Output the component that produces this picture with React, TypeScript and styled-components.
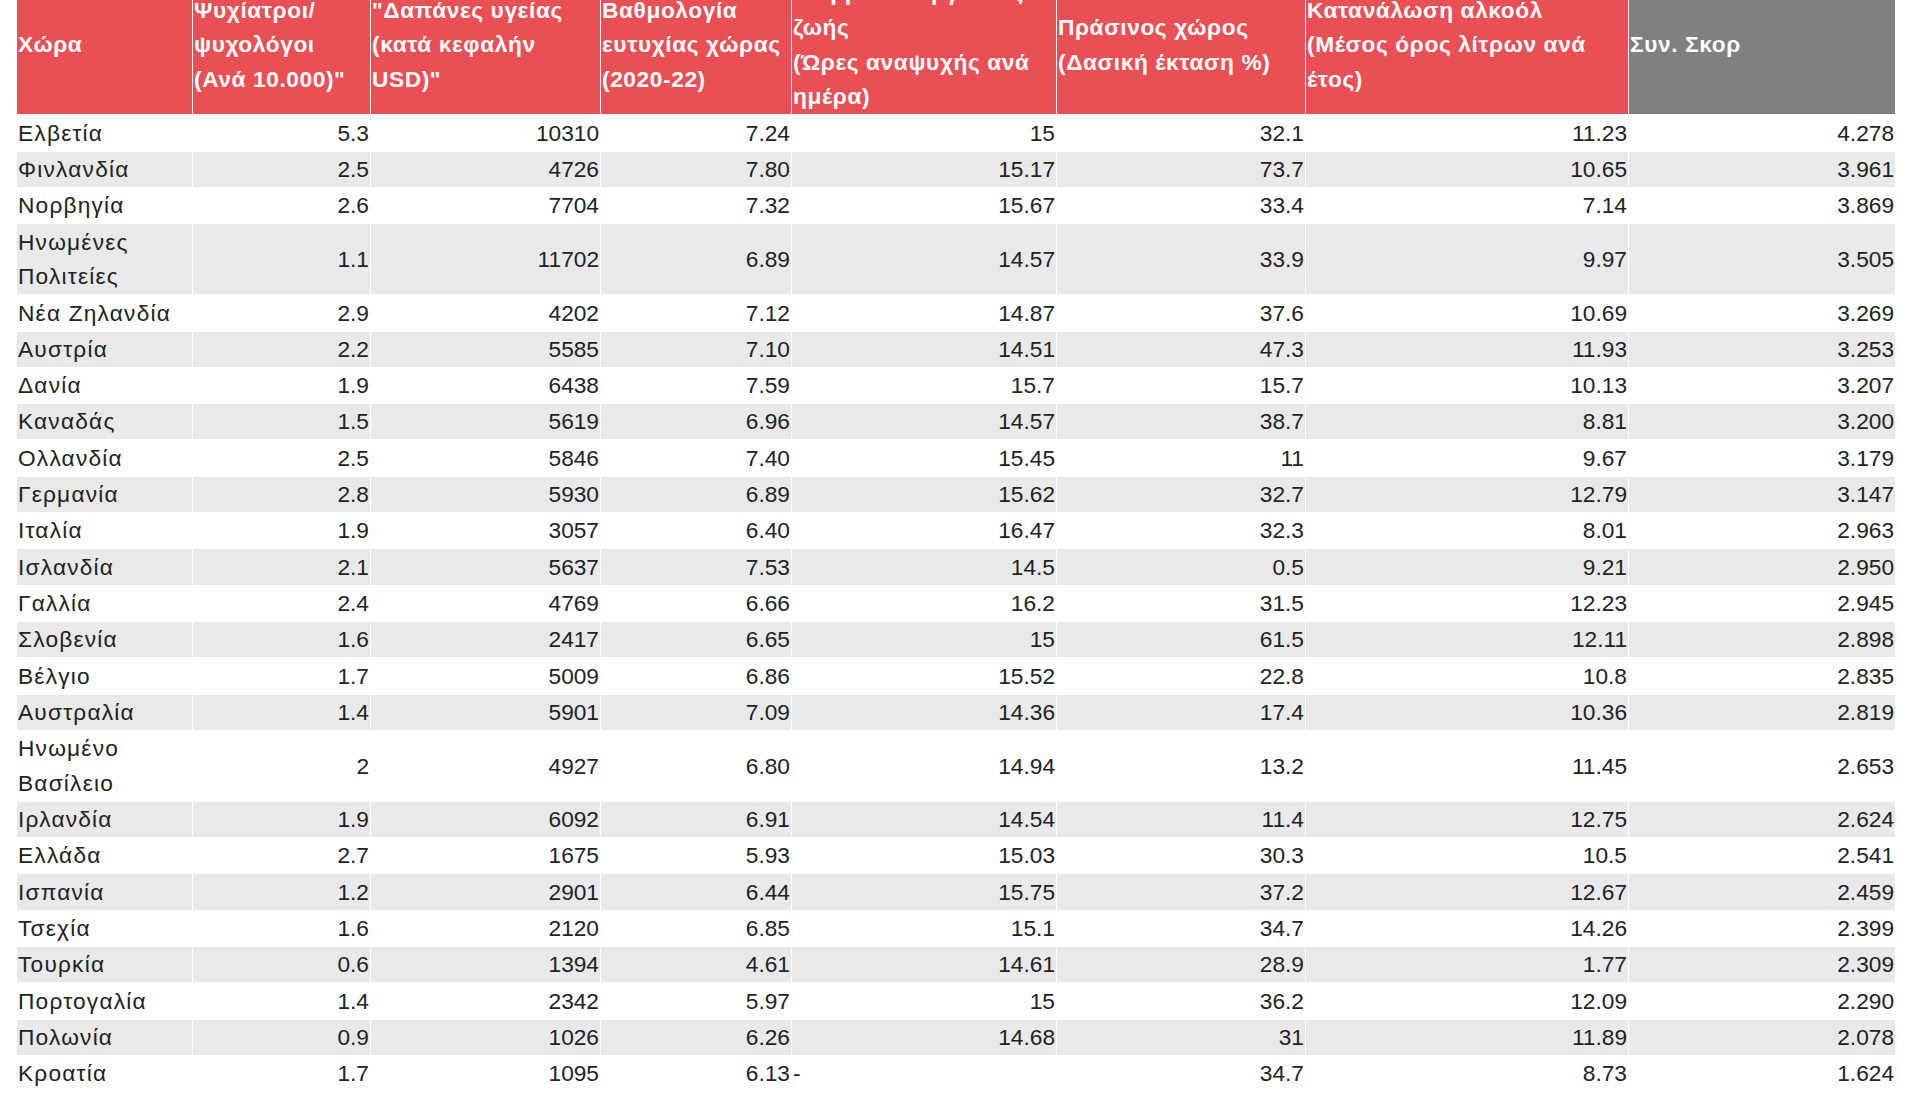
import styled, { createGlobalStyle } from "styled-components"

const GlobalStyle = createGlobalStyle`
  html, body {
    margin: 0;
    padding: 0;
    background: #ffffff;
  }
  body {
    font-family: "Liberation Sans", Arial, "Noto Sans", sans-serif;
    overflow: hidden;
  }
`

const Page = styled.div`
  padding: 0 13px 0 16px;
`

const Table = styled.table`
  border-collapse: collapse;
  table-layout: fixed;
  width: 1879px;
  margin-top: -26px;
  font-size: 22.7px;
  line-height: 34.7px;
`

const HeadCell = styled.th<{ $tone?: "red" | "gray" }>`
  background: ${(p) => (p.$tone === "gray" ? "#808080" : "#E94F54")};
  color: #ffffff;
  font-weight: 700;
  letter-spacing: 0.6px;
  text-align: left;
  vertical-align: middle;
  padding: 0.3px 1px;
  border: 1px solid #ffffff;
  white-space: nowrap;
`

const Row = styled.tr`
  &:nth-child(even) {
    background: #E9E9E9;
  }
`

const Cell = styled.td<{ $num?: boolean }>`
  color: #222222;
  text-align: ${(p) => (p.$num ? "right" : "left")};
  letter-spacing: ${(p) => (p.$num ? "0" : "1.2px")};
  vertical-align: middle;
  padding: 0.3px 1px;
  border: 1px solid #ffffff;
  white-space: ${(p) => (p.$num ? "nowrap" : "normal")};
`

const widths = [176, 178, 230, 191, 265, 249, 323, 267]

const headers: { lines: string[]; tone?: "red" | "gray" }[] = [
  { lines: ["Χώρα"] },
  { lines: ["Ψυχίατροι/", "ψυχολόγοι", "(Ανά 10.000)\""] },
  { lines: ["\"Δαπάνες υγείας", "(κατά κεφαλήν", "USD)\""] },
  { lines: ["Βαθμολογία", "ευτυχίας χώρας", "(2020-22)"] },
  { lines: ["Ισορροπία εργασίας/", "ζωής", "(Ώρες αναψυχής ανά", "ημέρα)"] },
  { lines: ["Πράσινος χώρος", "(Δασική έκταση %)"] },
  { lines: ["Κατανάλωση αλκοόλ", "(Μέσος όρος λίτρων ανά", "έτος)"] },
  { lines: ["Συν. Σκορ"], tone: "gray" },
]

// χώρα, ψυχίατροι, δαπάνες, ευτυχία, ισορροπία, πράσινο, αλκοόλ, σκορ
const rows: string[][] = [
  ["Ελβετία", "5.3", "10310", "7.24", "15", "32.1", "11.23", "4.278"],
  ["Φινλανδία", "2.5", "4726", "7.80", "15.17", "73.7", "10.65", "3.961"],
  ["Νορβηγία", "2.6", "7704", "7.32", "15.67", "33.4", "7.14", "3.869"],
  ["Ηνωμένες Πολιτείες", "1.1", "11702", "6.89", "14.57", "33.9", "9.97", "3.505"],
  ["Νέα Ζηλανδία", "2.9", "4202", "7.12", "14.87", "37.6", "10.69", "3.269"],
  ["Αυστρία", "2.2", "5585", "7.10", "14.51", "47.3", "11.93", "3.253"],
  ["Δανία", "1.9", "6438", "7.59", "15.7", "15.7", "10.13", "3.207"],
  ["Καναδάς", "1.5", "5619", "6.96", "14.57", "38.7", "8.81", "3.200"],
  ["Ολλανδία", "2.5", "5846", "7.40", "15.45", "11", "9.67", "3.179"],
  ["Γερμανία", "2.8", "5930", "6.89", "15.62", "32.7", "12.79", "3.147"],
  ["Ιταλία", "1.9", "3057", "6.40", "16.47", "32.3", "8.01", "2.963"],
  ["Ισλανδία", "2.1", "5637", "7.53", "14.5", "0.5", "9.21", "2.950"],
  ["Γαλλία", "2.4", "4769", "6.66", "16.2", "31.5", "12.23", "2.945"],
  ["Σλοβενία", "1.6", "2417", "6.65", "15", "61.5", "12.11", "2.898"],
  ["Βέλγιο", "1.7", "5009", "6.86", "15.52", "22.8", "10.8", "2.835"],
  ["Αυστραλία", "1.4", "5901", "7.09", "14.36", "17.4", "10.36", "2.819"],
  ["Ηνωμένο Βασίλειο", "2", "4927", "6.80", "14.94", "13.2", "11.45", "2.653"],
  ["Ιρλανδία", "1.9", "6092", "6.91", "14.54", "11.4", "12.75", "2.624"],
  ["Ελλάδα", "2.7", "1675", "5.93", "15.03", "30.3", "10.5", "2.541"],
  ["Ισπανία", "1.2", "2901", "6.44", "15.75", "37.2", "12.67", "2.459"],
  ["Τσεχία", "1.6", "2120", "6.85", "15.1", "34.7", "14.26", "2.399"],
  ["Τουρκία", "0.6", "1394", "4.61", "14.61", "28.9", "1.77", "2.309"],
  ["Πορτογαλία", "1.4", "2342", "5.97", "15", "36.2", "12.09", "2.290"],
  ["Πολωνία", "0.9", "1026", "6.26", "14.68", "31", "11.89", "2.078"],
  ["Κροατία", "1.7", "1095", "6.13", "-", "34.7", "8.73", "1.624"],
]

// αριθμοί δεξιά, κείμενο αριστερά (όπως σε λογιστικό φύλλο)
const isNumber = (v: string) => /^[0-9.]+$/.test(v)

export default function App() {
  return (
    <Page>
      <GlobalStyle />
      <Table>
        <colgroup>
          {widths.map((w, i) => (
            <col key={i} style={{ width: w }} />
          ))}
        </colgroup>
        <thead>
          <tr>
            {headers.map((h, i) => (
              <HeadCell key={i} $tone={h.tone}>
                {h.lines.map((line, j) => (
                  <span key={j}>
                    {j > 0 && <br />}
                    {line}
                  </span>
                ))}
              </HeadCell>
            ))}
          </tr>
        </thead>
        <tbody>
          {rows.map((r) => (
            <Row key={r[0]}>
              {r.map((v, i) => (
                <Cell key={i} $num={isNumber(v)}>
                  {v}
                </Cell>
              ))}
            </Row>
          ))}
        </tbody>
      </Table>
    </Page>
  )
}
